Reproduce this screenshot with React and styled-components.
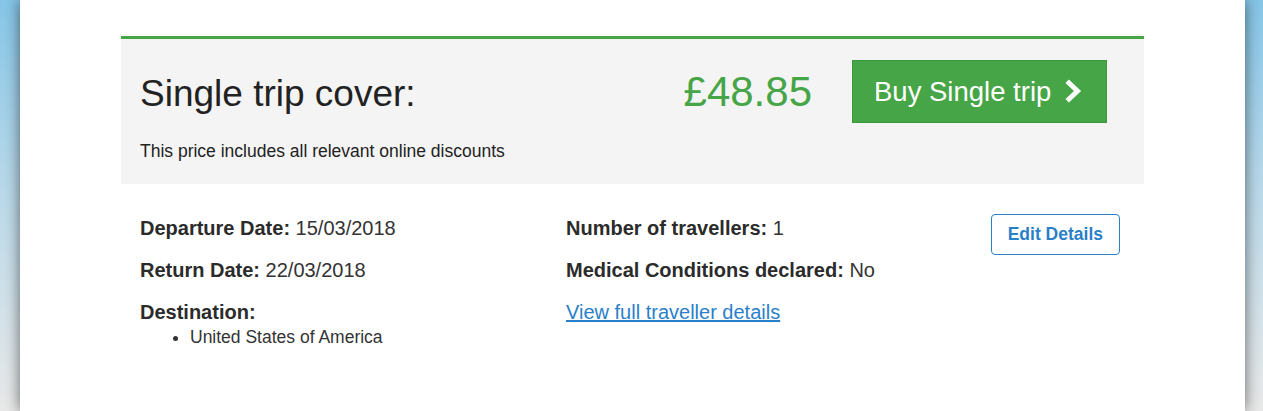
import styled, { createGlobalStyle } from 'styled-components';

const GlobalStyle = createGlobalStyle`
  html, body {
    margin: 0;
    padding: 0;
  }

  body {
    min-height: 100vh;
    background: linear-gradient(to bottom, #86c6e8 0%, #b9d9ea 45%, #e9e9e9 100%);
    font-family: "Liberation Sans", Arial, sans-serif;
    color: #333;
  }
`;

const Page = styled.main`
  width: 1225px;
  min-height: 100vh;
  margin-left: 20px;
  padding-top: 36px;
  box-sizing: border-box;
  background: #fff;
  box-shadow: 0 0 14px rgba(0, 0, 0, 0.55);
`;

const Quote = styled.section`
  width: 1023px;
  margin: 0 auto;
`;

const QuoteHeader = styled.div`
  background-color: #f4f4f4;
  border-top: 3px solid #46a546;
  padding: 21px 37px 22px 19px;
`;

const HeaderRow = styled.div`
  display: flex;
  align-items: center;
`;

const Title = styled.h2`
  flex: 1;
  margin: 0;
  padding-top: 5px;
  font-size: 37px;
  font-weight: normal;
  color: #222;
`;

const Price = styled.span`
  font-size: 42px;
  color: #46a546;
  margin-right: 40px;
`;

const BuyButton = styled.button`
  display: flex;
  align-items: center;
  gap: 14px;
  height: 63px;
  width: 255px;
  padding: 0 0 0 21px;
  box-sizing: border-box;
  background-color: #46a546;
  border: 1px solid #3c963c;
  color: #fff;
  font-family: inherit;
  font-size: 27.5px;
  cursor: pointer;

  svg {
    width: 17px;
    height: 24px;
    margin-top: -2px;
  }
`;

const Note = styled.p`
  margin: 18px 0 0;
  font-size: 17.5px;
  color: #222;
`;

const Details = styled.div`
  display: grid;
  grid-template-columns: 426px 1fr auto;
  padding: 33px 24px 0 19px;
`;

const Column = styled.div`
  display: flex;
  flex-direction: column;
  gap: 20px;
`;

const Item = styled.div`
  font-size: 20px;
  line-height: 22px;
  color: #333;

  strong {
    color: #2b2b2b;
  }
`;

const Places = styled.ul`
  margin: 4px 0 0;
  padding-left: 50px;
  font-size: 17.5px;
  line-height: 20px;
`;

const DetailsLink = styled.a`
  font-size: 20px;
  line-height: 22px;
  color: #2a7fc9;
  text-decoration: underline;
`;

const EditButton = styled.button`
  height: 41px;
  padding: 0 16px;
  margin-top: -3px;
  background: #fff;
  border: 1px solid #2a7fc9;
  border-radius: 4px;
  color: #2a7fc9;
  font-family: inherit;
  font-size: 17.5px;
  font-weight: bold;
  cursor: pointer;
`;

const Chevron = () => (
  <svg viewBox="0 0 17 24" aria-hidden="true">
    <polyline
      points="4,4 12.5,12 4,20"
      fill="none"
      stroke="currentColor"
      strokeWidth="5"
      strokeLinecap="square"
      strokeLinejoin="miter"
    />
  </svg>
);

const App = () => {
  return (
    <>
      <GlobalStyle />
      <Page>
        <Quote>
          <QuoteHeader>
            <HeaderRow>
              <Title>Single trip cover:</Title>
              <Price>£48.85</Price>
              <BuyButton>
                Buy Single trip
                <Chevron />
              </BuyButton>
            </HeaderRow>
            <Note>This price includes all relevant online discounts</Note>
          </QuoteHeader>

          <Details>
            <Column>
              <Item>
                <strong>Departure Date:</strong> 15/03/2018
              </Item>
              <Item>
                <strong>Return Date:</strong> 22/03/2018
              </Item>
              <Item>
                <strong>Destination:</strong>
                <Places>
                  <li>United States of America</li>
                </Places>
              </Item>
            </Column>
            <Column>
              <Item>
                <strong>Number of travellers:</strong> 1
              </Item>
              <Item>
                <strong>Medical Conditions declared:</strong> No
              </Item>
              <DetailsLink href="#/">View full traveller details</DetailsLink>
            </Column>
            <div>
              <EditButton>Edit Details</EditButton>
            </div>
          </Details>
        </Quote>
      </Page>
    </>
  );
};

export default App;
